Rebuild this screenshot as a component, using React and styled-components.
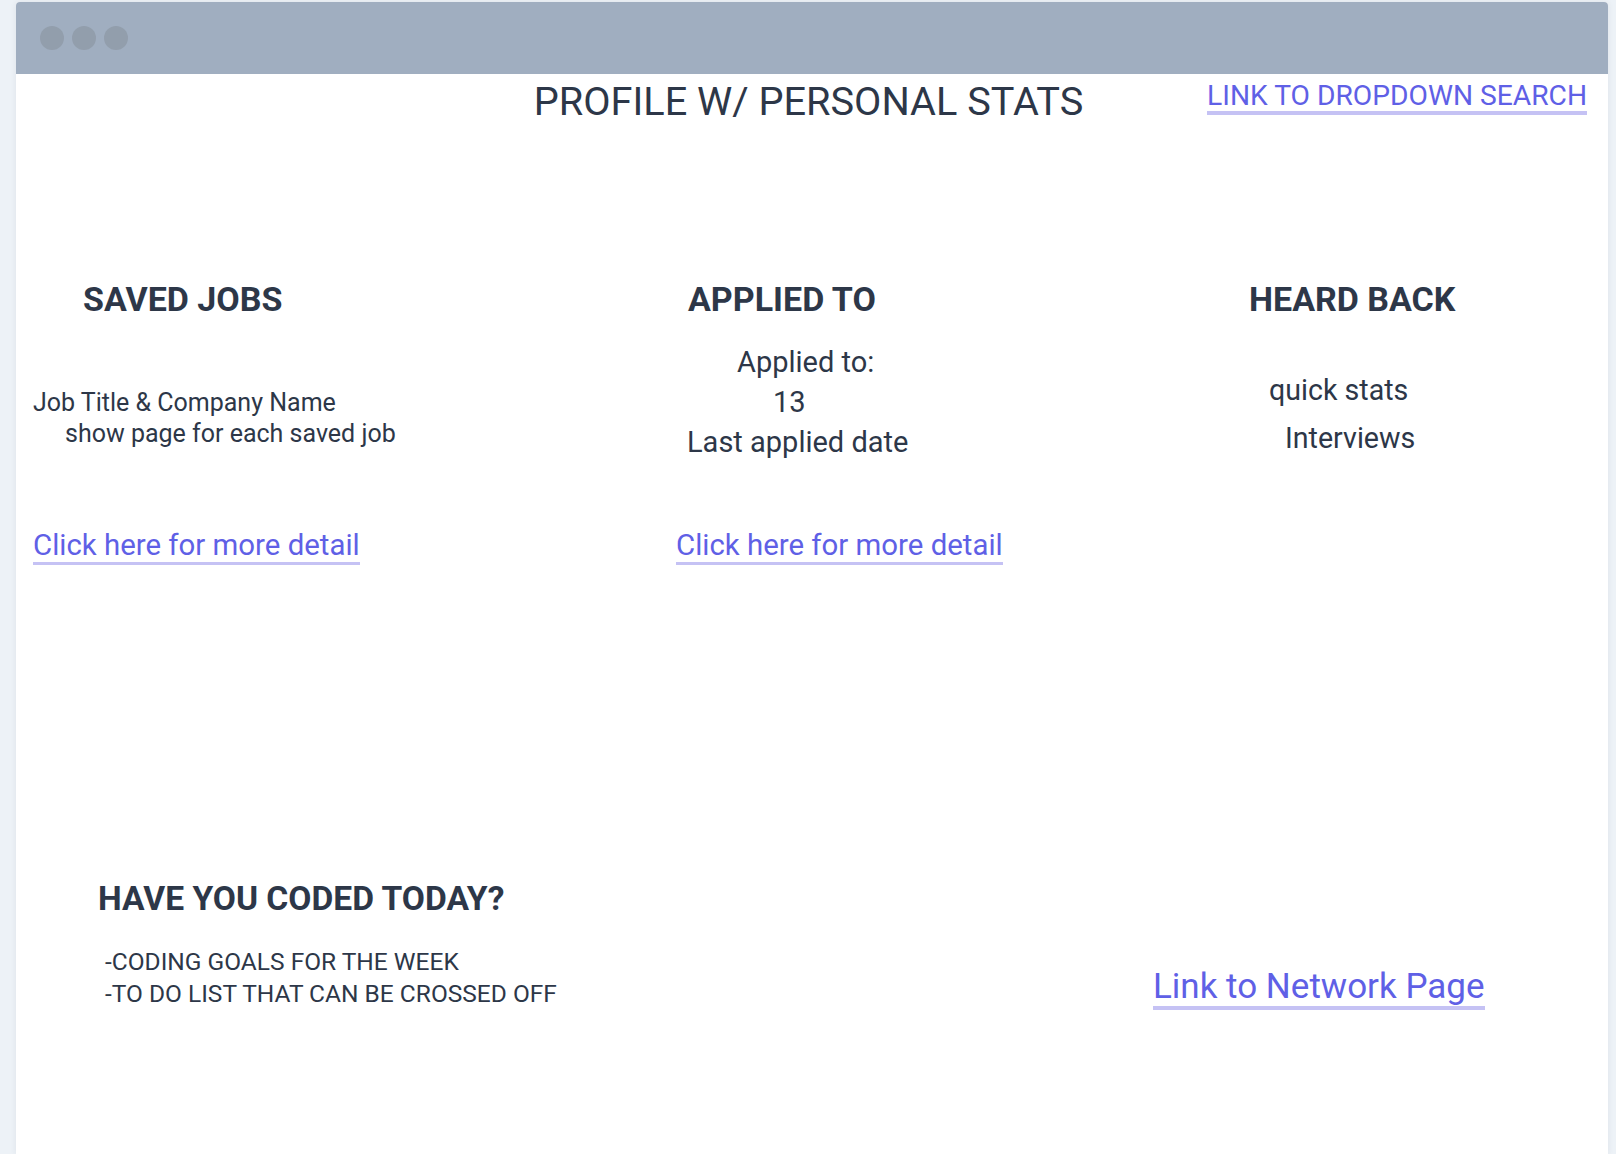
import React from 'react';
import styled, { createGlobalStyle } from 'styled-components';

const GlobalStyle = createGlobalStyle`
  html, body {
    margin: 0;
    padding: 0;
    background: #edf2f7;
  }
  body {
    font-family: Roboto, "Noto Sans", "Liberation Sans", sans-serif;
    color: #2d3748;
  }
`;

function App() {
  return (
    <Page>
      <GlobalStyle />
      <Window>
        <TitleBar>
          <Dot />
          <Dot />
          <Dot />
        </TitleBar>

        <Header>
          <span />
          <PageTitle>PROFILE W/ PERSONAL STATS</PageTitle>
          <HeaderLink href="#">LINK TO DROPDOWN SEARCH</HeaderLink>
        </Header>

        <Columns>
          <Column>
            <ColumnHeading $indent={50}>SAVED JOBS</ColumnHeading>
            <TextBlock $top={71.3} $size={25} $lh={31}>
              <Line>Job Title &amp; Company Name</Line>
              <Line $indent={32}>show page for each saved job</Line>
            </TextBlock>
            <DetailLink href="#" $top={82.6}>Click here for more detail</DetailLink>
          </Column>

          <Column>
            <ColumnHeading $indent={12}>APPLIED TO</ColumnHeading>
            <TextBlock $top={26.4} $size={29} $lh={40}>
              <Line $indent={61}>Applied to:</Line>
              <Line $indent={97}>13</Line>
              <Line $indent={11}>Last applied date</Line>
            </TextBlock>
            <DetailLink href="#" $top={69.4}>Click here for more detail</DetailLink>
          </Column>

          <Column>
            <ColumnHeading $indent={13}>HEARD BACK</ColumnHeading>
            <TextBlock $top={50} $size={28.6} $lh={48}>
              <Line $indent={33}>quick stats</Line>
              <Line $indent={49}>Interviews</Line>
            </TextBlock>
          </Column>
        </Columns>

        <Bottom>
          <CodingBlock>
            <ColumnHeading $size={33.6}>HAVE YOU CODED TODAY?</ColumnHeading>
            <TextBlock $top={31} $size={24.5} $lh={32}>
              <Line $indent={7}>-CODING GOALS FOR THE WEEK</Line>
              <Line $indent={7}>-TO DO LIST THAT CAN BE CROSSED OFF</Line>
            </TextBlock>
          </CodingBlock>
          <NetworkLink href="#">Link to Network Page</NetworkLink>
        </Bottom>
      </Window>
    </Page>
  );
}

const Page = styled.div`
  padding: 2px 8px 0 16px;
  min-height: 100vh;
  box-sizing: border-box;
`;

const Window = styled.div`
  background: #ffffff;
  border-radius: 4px 4px 0 0;
  min-height: calc(100vh - 2px);
  box-shadow: 0 0 6px rgba(45, 55, 72, 0.08);
  overflow: hidden;
`;

const TitleBar = styled.div`
  height: 72px;
  background: #a0aec0;
  display: flex;
  align-items: center;
  gap: 8px;
  padding-left: 24px;
`;

const Dot = styled.span`
  width: 24px;
  height: 24px;
  border-radius: 50%;
  background: #929eac;
`;

const Header = styled.div`
  display: grid;
  grid-template-columns: 1fr auto 1fr;
  align-items: start;
  padding: 7.5px 21px 0 14px;
`;

const PageTitle = styled.h1`
  margin: 0;
  font-size: 39.7px;
  line-height: 1;
  font-weight: 400;
  color: #2d3748;
  white-space: nowrap;
`;

const LinkBase = styled.a`
  display: inline-block;
  color: #5f60e6;
  text-decoration: none;
  line-height: 1;
  white-space: nowrap;
  border-bottom: 3px solid #c5c2f4;
`;

const HeaderLink = styled(LinkBase)`
  justify-self: end;
  font-size: 28.2px;
  padding-bottom: 1px;
  border-bottom-width: 4px;
`;

const Columns = styled.div`
  display: grid;
  grid-template-columns: 643px 560px 1fr;
  padding-left: 17px;
  margin-top: 160.4px;
`;

const Column = styled.div`
  display: flex;
  flex-direction: column;
  align-items: flex-start;
`;

const ColumnHeading = styled.h2`
  margin: 0 0 0 ${(p) => p.$indent || 0}px;
  font-size: ${(p) => p.$size || 34}px;
  line-height: 1;
  font-weight: 700;
  color: #2d3748;
  white-space: nowrap;
`;

const TextBlock = styled.div`
  margin-top: ${(p) => p.$top}px;
  font-size: ${(p) => p.$size}px;
  line-height: ${(p) => p.$lh}px;
  display: flex;
  flex-direction: column;
`;

const Line = styled.span`
  padding-left: ${(p) => p.$indent || 0}px;
  white-space: nowrap;
`;

const DetailLink = styled(LinkBase)`
  margin-top: ${(p) => p.$top}px;
  font-size: 29.4px;
  padding-bottom: 1.4px;
`;

const Bottom = styled.div`
  display: grid;
  grid-template-columns: 1137px auto;
  align-items: start;
  margin-top: 316.6px;
`;

const CodingBlock = styled.div`
  padding-left: 82px;
  display: flex;
  flex-direction: column;
`;

const NetworkLink = styled(LinkBase)`
  justify-self: start;
  margin-top: 87.4px;
  font-size: 35px;
  padding-bottom: 2px;
  border-bottom-width: 4px;
`;

export default App;
